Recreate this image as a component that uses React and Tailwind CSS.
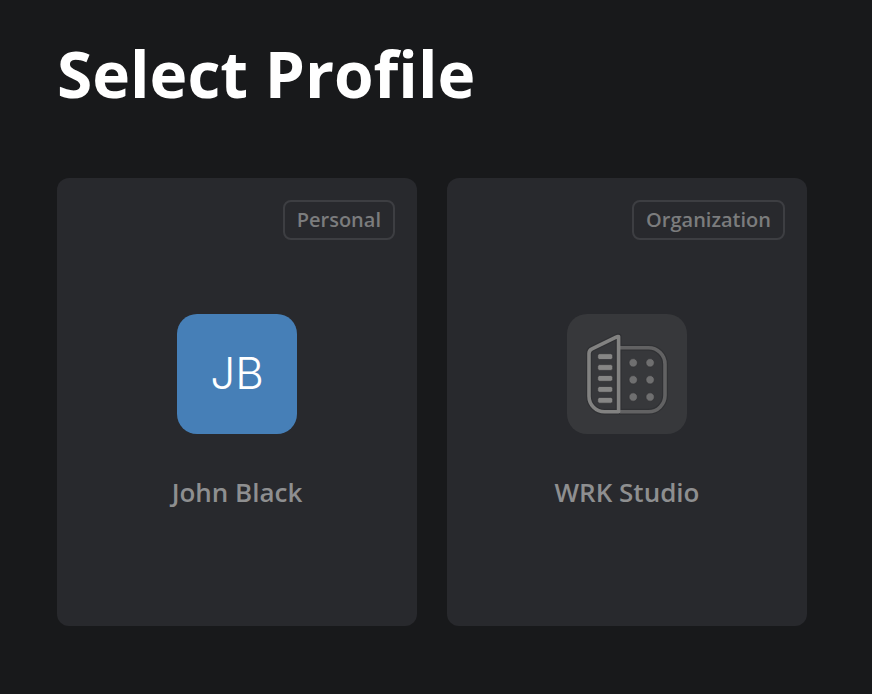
import React from 'react';

const WING = 'M53 33.7H81.5A16.5 16.5 0 0 1 98 50.2V81.3A16.5 16.5 0 0 1 81.5 97.8H53';
const TOWER = 'M51.6 22.5V97.8H37.5A15.5 15.5 0 0 1 22 82.3V39.5Q22 36.2 25 34.8L49.6 22.9Q51.6 21.8 51.6 23.5Z';

const BuildingIcon = () => (
    <svg width="120" height="120" viewBox="0 0 120 120" fill="none" strokeWidth="3.6" strokeLinejoin="round">
        {/* dark rim around both shapes */}
        <g stroke="#303134" strokeWidth="6">
            <path d={WING} />
            <path d={TOWER} />
        </g>
        <path d={WING} stroke="#626263" />
        <g fill="#6f6f70" stroke="#303134" strokeWidth="0.7">
            {[48.8, 65.8, 83].map((cy) => (
                <React.Fragment key={cy}>
                    <circle cx="66.2" cy={cy} r="4.2" />
                    <circle cx="83.1" cy={cy} r="4.2" />
                </React.Fragment>
            ))}
        </g>
        <path d={TOWER} stroke="#828281" />
        <g fill="#868685" stroke="#303134" strokeWidth="0.7">
            {[39.7, 50.6, 61.5, 72.5, 83.4].map((y) => (
                <rect key={y} x="30.7" y={y} width="15" height="5.8" rx="2" />
            ))}
        </g>
    </svg>
);

const PROFILES = [
    {
        name: 'John Black',
        type: 'Personal',
        avatarClass: 'bg-[#467fb7]',
        avatar: <span className="pb-0.5 font-[Inter,sans-serif] text-[44px] leading-none font-light text-white">JB</span>,
    },
    {
        name: 'WRK Studio',
        type: 'Organization',
        avatarClass: 'bg-[#37383b]',
        avatar: <BuildingIcon />,
    },
];

const ProfileCard = ({ name, type, avatar, avatarClass }) => (
    <button className="flex h-[448px] w-[360px] flex-col items-center rounded-xl bg-[#28292d] pt-[22px]">
        <span className="mr-[22px] flex h-10 items-center self-end rounded-lg border-2 border-[#3d3e42] px-3 text-xl leading-none font-semibold text-[#7b7c7d]">
            {type}
        </span>
        <span className={`mt-[74px] flex size-[120px] items-center justify-center overflow-hidden rounded-[20px] ${avatarClass}`}>
            {avatar}
        </span>
        <span className="mt-10 text-[26px] leading-[36px] font-semibold text-[#8e8f90]">{name}</span>
    </button>
);

export default function App() {
    return (
        <main className="h-[694px] w-[872px] overflow-hidden bg-[#18191b] px-[57px] pt-[29px] font-['Open_Sans',sans-serif]">
            <h1 className="h-[149px] text-[64px] leading-[90px] font-bold whitespace-nowrap text-white">Select Profile</h1>
            <div className="flex gap-[30px]">
                {PROFILES.map((profile) => (
                    <ProfileCard key={profile.name} {...profile} />
                ))}
            </div>
        </main>
    );
}
